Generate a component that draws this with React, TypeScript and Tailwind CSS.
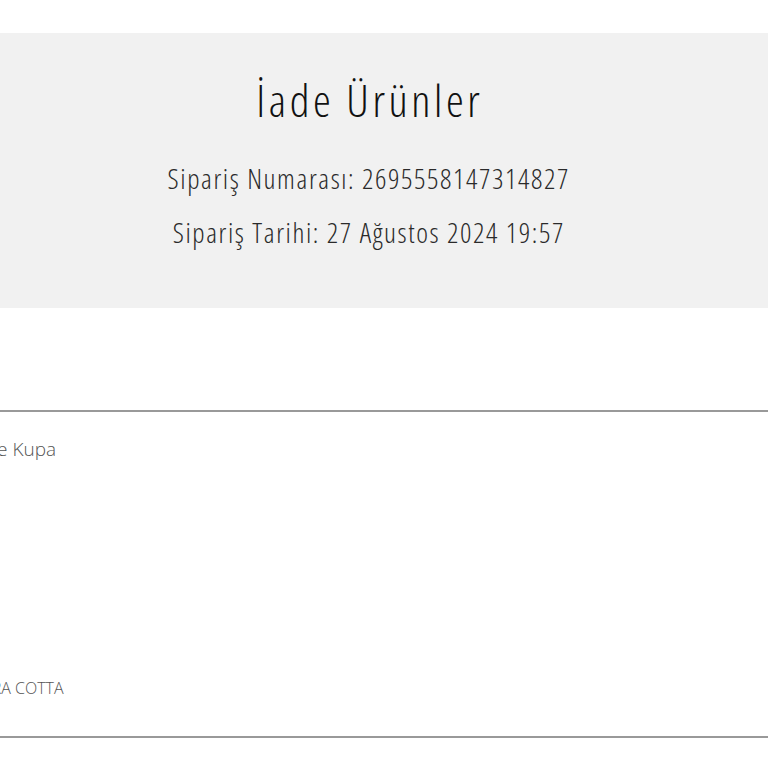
import React from "react";

export default function App() {
  const font = { fontFamily: '"Open Sans", "DejaVu Sans Condensed", sans-serif' };
  return (
    <div className="w-[768px] h-[768px] overflow-hidden bg-white font-light" style={font}>
      <div className="h-[33px]" />
      <div className="h-[275px] bg-[#f1f1f1] flex flex-col items-center pr-[32px]">
        <h1 className="mt-[44px] text-[45px] leading-[45px] text-[#111] font-light font-stretch-[75%] tracking-[3.6px] pl-[3.6px]">İade Ürünler</h1>
        <p className="mt-[42px] text-[28px] leading-[28px] text-[#2a2a2a] font-light font-stretch-[75%] tracking-[1.6px] pl-[1.6px]">Sipariş Numarası: 2695558147314827</p>
        <p className="mt-[26px] text-[28px] leading-[28px] text-[#2a2a2a] font-light font-stretch-[75%] tracking-[1.6px] pl-[1.6px]">Sipariş Tarihi: 27 Ağustos 2024 19:57</p>
      </div>
      <div className="h-[102px]" />
      <div className="border-t-2 border-b-2 border-[#999] h-[328px] flex flex-col justify-between">
        <div className="mt-[28px] ml-[-44px] text-[19px] leading-[19px] text-[#555]">Kahve Kupa</div>
        <div className="mb-[40px] ml-[-35px] text-[16px] leading-[16px] text-[#555]">TERRA COTTA</div>
      </div>
    </div>
  );
}
